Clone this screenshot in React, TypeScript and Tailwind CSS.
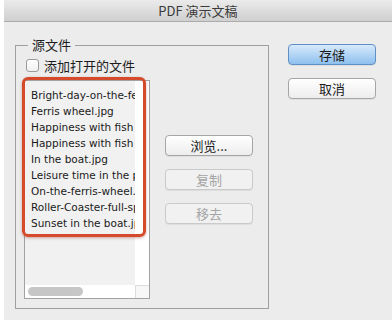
const FILES = [
  'Bright-day-on-the-ferris-wheel.jpg',
  'Ferris wheel.jpg',
  'Happiness with fish 1.jpg',
  'Happiness with fish 2.jpg',
  'In the boat.jpg',
  'Leisure time in the park.jpg',
  'On-the-ferris-wheel.jpg',
  'Roller-Coaster-full-speed.jpg',
  'Sunset in the boat.jpg',
];

const cjk = "font-['Noto_Sans_CJK_SC',sans-serif]";

function Button({ label, primary, disabled }: { label: string; primary?: boolean; disabled?: boolean }) {
  let tone = 'border-[#a6a6a6] bg-gradient-to-b from-white to-[#ededed] text-[#1c1c1c]';
  if (primary) tone = 'border-[#5f8fc4] bg-gradient-to-b from-[#d8eafc] to-[#8ec0ee] text-[#1c1c1c]';
  if (disabled) tone = 'border-[#cacaca] bg-[#f1f1f1] text-[#a5a5a5]';
  return (
    <div
      className={`flex h-[21px] w-[88px] items-center justify-center rounded-[4px] border text-[13px] leading-none shadow-[0_1px_0_rgba(0,0,0,0.06)] ${tone} ${cjk}`}
    >
      {label}
    </div>
  );
}

function FileList() {
  return (
    <div className="relative h-[219px] w-[126px]">
      <div className="flex h-full w-full flex-col border border-[#a2a2a2] bg-[#f1f1f1]">
        <div className="flex h-[204px]">
          <div className="w-[110px] overflow-hidden whitespace-nowrap pl-[6px] pt-[6px] font-['DejaVu_Sans',sans-serif] text-[10.5px] leading-[16px] text-[#1a1a1a]">
            {FILES.map((f) => (
              <div key={f}>{f}</div>
            ))}
          </div>
          <div className="w-[14px] bg-white" />
        </div>
        <div className="flex h-[13px] bg-white">
          <div className="flex w-[110px] items-center pl-[3px]">
            <div className="h-[9px] w-[55px] rounded-full bg-[#c6c6c6]" />
          </div>
          <div className="w-[14px] border-l border-t border-[#dcdcdc] bg-[#f7f7f7]" />
        </div>
      </div>
      <div className="pointer-events-none absolute left-[-2px] top-[-3px] h-[160px] w-[124px] rounded-[6px] border-[3px] border-[#d44a2b] shadow-[0_1px_3px_rgba(120,30,10,0.35)]" />
    </div>
  );
}

export default function App() {
  return (
    <div className="flex h-[326px] w-[392px] bg-white">
      <div className="ml-[4px] flex h-[320px] w-[388px] flex-col bg-[#ececec]">
        <div
          className={`flex h-[22px] items-center justify-center border-b border-[#ababab] bg-gradient-to-b from-[#ebebeb] to-[#cfcfcf] text-[13px] text-[#3a3a3a] ${cjk}`}
        >
          PDF 演示文稿
        </div>
        <div className="flex">
          <fieldset className="ml-[11px] mt-[15px] h-[272px] w-[254px] border border-[#a0a0a0]">
            <legend className={`ml-[12px] px-[4px] text-[13px] leading-[16px] text-[#1c1c1c] ${cjk}`}>源文件</legend>
            <div className="ml-[10px] mt-[5px] flex h-[14px] items-center gap-[5px]">
              <div className="h-[13px] w-[13px] rounded-[3px] border border-[#9a9a9a] bg-gradient-to-b from-white to-[#f0f0f0]" />
              <span className={`text-[13px] leading-none text-[#1c1c1c] ${cjk}`}>添加打开的文件</span>
            </div>
            <div className="ml-[8px] mt-[8px] flex">
              <FileList />
              <div className="ml-[15px] mt-[55px] flex flex-col gap-[13px]">
                <Button label="浏览..." />
                <Button label="复制" disabled />
                <Button label="移去" disabled />
              </div>
            </div>
          </fieldset>
          <div className="ml-[19px] mt-[22px] flex flex-col gap-[13px]">
            <Button label="存储" primary />
            <Button label="取消" />
          </div>
        </div>
      </div>
    </div>
  );
}
